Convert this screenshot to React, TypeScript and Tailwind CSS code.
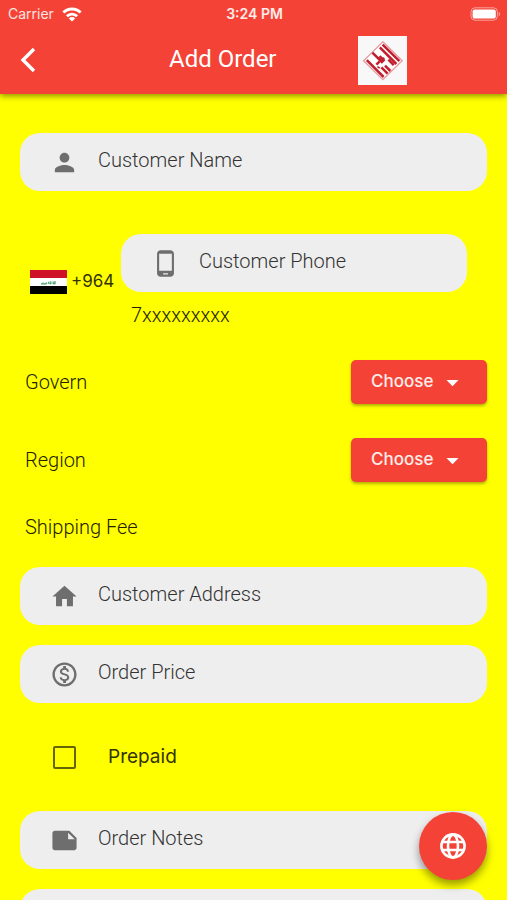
import { useState } from "react";
import type { InputHTMLAttributes, ReactNode } from "react";
import {
  MdArrowDropDown,
  MdHome,
  MdNote,
  MdOutlineMonetizationOn,
  MdPerson,
  MdPhoneAndroid,
} from "react-icons/md";

function WifiIcon() {
  return (
    <svg viewBox="0 0 20 15" className="h-[15px] w-5 text-white" fill="none" stroke="currentColor" strokeWidth="2.9" aria-hidden>
      <path d="M1.4 5.5a12.2 12.2 0 0 1 17.2 0" />
      <path d="M4.9 9.2a7.2 7.2 0 0 1 10.2 0" />
      <path d="M10 14.6l-3.2-3.2a4.5 4.5 0 0 1 6.4 0z" fill="currentColor" stroke="none" />
    </svg>
  );
}

function BatteryIcon() {
  return (
    <svg viewBox="0 0 31 14" className="h-[14px] w-[31px]" aria-hidden>
      <rect x="1" y="0.8" width="26.4" height="12.4" rx="4" fill="none" stroke="#fff" strokeOpacity="0.5" />
      <rect x="2.6" y="2.4" width="23.2" height="9.2" rx="2.2" fill="#fff" />
      <path d="M28.8 4.8c1.6.7 1.6 3.7 0 4.4z" fill="#fff" fillOpacity="0.6" />
    </svg>
  );
}

function GlobeIcon() {
  return (
    <svg viewBox="0 0 26 26" className="size-[26px]" fill="none" stroke="currentColor" strokeWidth="2.6" aria-hidden>
      <circle cx="13" cy="13" r="11.6" />
      <ellipse cx="13" cy="13" rx="5" ry="11.4" />
      <path d="M2.4 9h21.2M2.4 17h21.2" />
    </svg>
  );
}

function Logo() {
  return (
    <svg viewBox="0 0 49 49" className="ml-5 size-[49px] bg-[#f8f8f8]" role="img" aria-label="Logo">
      <path d="M24.8 5.8L44.2 24.8 24.8 43.6 5.6 24.8z" fill="#fff" stroke="#e79aa0" strokeWidth="1.3" />
      <g fill="none" stroke="#c21f2e" strokeWidth="2.5">
        {/* long bars falling to the right corner */}
        <path d="M24.6 8.6L41.4 25.2" />
        <path d="M21.8 11.4L38.4 28" />
        <path d="M30.4 23.6l5.4 5.6" />
        {/* left strokes */}
        <path d="M14.4 16.6l9.4 9.4 1.8-1.8-4-4" />
        <path d="M8.8 24.2L25.6 41" />
        <path d="M18.4 28.6l3.2-3.2" />
        {/* short bars near the bottom corner */}
        <path d="M27 29.6l5.4 5.4" />
        <path d="M23.4 31.4l6.2 6.2" />
        <path d="M19.4 30.6l2.4 1.6" strokeWidth="1.6" />
      </g>
      <circle cx="25.2" cy="22.8" r="1.5" fill="#c21f2e" />
    </svg>
  );
}

function IraqFlag() {
  return (
    <svg viewBox="0 0 37 24" className="h-6 w-[37px]" role="img" aria-label="Iraq">
      <path fill="#ce1126" d="M0 0h37v8H0z" />
      <path fill="#fff" d="M0 8h37v8H0z" />
      <path fill="#000" d="M0 16h37v8H0z" />
      <path
        d="M11 13.8h5l.6-1.4M13 12.8v-.6M18 13.7l1.2-2M19.4 13.7h1.4v-2.4M22.6 13.7h2.4v-2.6M22.8 11.6l.8 1.2"
        fill="none"
        stroke="#3f9a6b"
        strokeWidth="1.2"
      />
    </svg>
  );
}

type FieldProps = InputHTMLAttributes<HTMLInputElement> & {
  icon?: ReactNode;
  label: string;
};

function Field({ icon, label, ...rest }: FieldProps) {
  return (
    <label className="flex h-[58px] items-center rounded-[20px] bg-[#eeeeee] pl-[30px] pr-5">
      <span className="w-12 shrink-0 text-[29px] text-[#6e6e6e]">{icon}</span>
      <input
        {...rest}
        aria-label={label}
        className="h-full min-w-0 flex-1 bg-transparent pb-1 text-xl font-light text-[#222] outline-none placeholder:text-[#333] placeholder:opacity-100"
      />
    </label>
  );
}

function Picker({ id, label }: { id: string; label: string }) {
  return (
    <div className="flex items-center justify-between pl-[5px]">
      <label htmlFor={id} className="text-xl font-light text-[#222200]">
        {label}
      </label>
      <div className="relative w-[136px]">
        <select
          id={id}
          className="h-11 w-full appearance-none rounded-[5px] bg-[#f44336] pl-5 font-['Inter'] text-[17px] font-medium text-white/90 shadow-[0_2px_3px_rgba(0,0,0,0.3)] outline-none"
        >
          <option>Choose</option>
        </select>
        <MdArrowDropDown className="pointer-events-none absolute right-5 top-2 text-[29px] text-white" />
      </div>
    </div>
  );
}

export default function App() {
  const [prepaid, setPrepaid] = useState(false);

  return (
    <div className="flex h-screen flex-col overflow-hidden bg-[#ffff00] font-['Roboto',sans-serif]">
      <header className="z-10 bg-[#f44336] pb-2 text-white shadow-[0_2px_6px_rgba(0,0,0,0.45)]">
        <div className="grid h-7 grid-cols-3 items-center pl-2 pr-1.5 font-['Inter'] text-sm">
          <div className="flex items-center gap-2 text-white/85">
            <span>Carrier</span>
            <WifiIcon />
          </div>
          <time className="text-center text-sm font-semibold text-white/90">3:24 PM</time>
          <div className="flex justify-end">
            <BatteryIcon />
          </div>
        </div>
        <div className="grid h-[58px] grid-cols-3 items-center pt-1">
          <button type="button" aria-label="Back" className="flex size-14 items-center justify-center">
            <svg viewBox="0 0 16 26" className="h-[26px] w-4" fill="none" stroke="currentColor" strokeWidth="3.4" aria-hidden>
              <path d="M14 2L3 13l11 11" />
            </svg>
          </button>
          <h1 className="whitespace-nowrap pb-0.5 text-2xl">Add Order</h1>
          <Logo />
        </div>
      </header>

      <main className="flex-1 overflow-y-auto px-5 pt-[39px] [scrollbar-width:none]">
        <form onSubmit={(e) => e.preventDefault()}>
          <Field icon={<MdPerson />} label="Customer Name" placeholder="Customer Name" />

          <div className="mt-[43px] flex items-center pl-2.5 pr-5">
            <div className="flex shrink-0 items-center gap-1">
              <IraqFlag />
              <span className="w-[50px] font-['Inter'] text-[17px] text-[#333300]">+964</span>
            </div>
            <div className="min-w-0 flex-1">
              <Field
                icon={<MdPhoneAndroid />}
                label="Customer Phone"
                placeholder="Customer Phone"
                type="tel"
                aria-describedby="phone-hint"
              />
              <p id="phone-hint" className="pl-2.5 pt-2 text-xl leading-[30px] font-light text-[#222200]">
                7xxxxxxxxx
              </p>
            </div>
          </div>

          <div className="mt-[30px] flex flex-col gap-[34px]">
            <Picker id="govern" label="Govern" />
            <Picker id="region" label="Region" />
          </div>

          <p className="mt-[30px] pl-[5px] text-xl leading-[30px] font-light text-[#222200]">Shipping Fee</p>

          <div className="mt-[25px] flex flex-col gap-5">
            <Field icon={<MdHome />} label="Customer Address" placeholder="Customer Address" />
            <Field icon={<MdOutlineMonetizationOn />} label="Order Price" placeholder="Order Price" inputMode="decimal" />
          </div>

          <label className="flex h-[108px] items-center gap-8 pl-[33px]">
            <input
              type="checkbox"
              checked={prepaid}
              onChange={(e) => setPrepaid(e.target.checked)}
              className="size-[23px] appearance-none rounded-[2px] border-2 border-[#666600] checked:bg-[#f44336]"
            />
            <span className="font-['Inter'] text-[19px] text-[#333300]">Prepaid</span>
          </label>

          <div className="flex flex-col gap-5 pb-10">
            <Field icon={<MdNote />} label="Order Notes" placeholder="Order Notes" />
            <Field label="Details" />
          </div>
        </form>
      </main>

      <button
        type="button"
        aria-label="Language"
        className="fixed bottom-5 right-5 z-20 flex size-[68px] items-center justify-center rounded-full bg-[#f44336] text-white shadow-[0_5px_9px_rgba(0,0,0,0.4)]"
      >
        <GlobeIcon />
      </button>
    </div>
  );
}
